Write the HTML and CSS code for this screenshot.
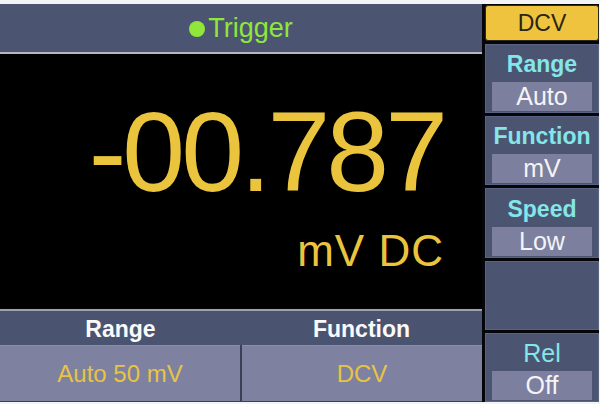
FILE: index.html
```html
<!DOCTYPE html>
<html>
<head>
<meta charset="utf-8">
<link rel="stylesheet" href="styles.css">
</head>
<body>
<div class="screen">
  <div class="main">
    <div class="topbar"><span class="dot"></span><span class="trigger">Trigger</span></div>
    <div class="display">
      <div class="value">-00.787</div>
      <div class="unit">mV DC</div>
    </div>
    <div class="bottom">
      <div class="heads">
        <div class="head">Range</div>
        <div class="head">Function</div>
      </div>
      <div class="boxes">
        <div class="box">Auto 50 mV</div>
        <div class="box">DCV</div>
      </div>
    </div>
  </div>
  <div class="side">
    <div class="mode">DCV</div>
    <div class="panel"><div class="label">Range</div><div class="pval">Auto</div></div>
    <div class="panel"><div class="label">Function</div><div class="pval">mV</div></div>
    <div class="panel"><div class="label">Speed</div><div class="pval">Low</div></div>
    <div class="panel"></div>
    <div class="panel"><div class="label thin">Rel</div><div class="pval">Off</div></div>
  </div>
</div>
</body>
</html>
```
FILE: styles.css
```css
html, body {
  margin: 0;
  padding: 0;
  background: #f4f4f6;
}
body {
  width: 600px;
  height: 404px;
  overflow: hidden;
  font-family: "Liberation Sans", Arial, sans-serif;
}
.screen {
  margin-top: 4px;
  height: 398px;
  width: 599px;
  background: #05060a;
  display: flex;
  gap: 3px;
}
.main {
  width: 482px;
  display: flex;
  flex-direction: column;
}
.topbar {
  height: 48px;
  background: #4b5571;
  border-bottom: 2px solid #b4b8c2;
  display: flex;
  align-items: center;
  justify-content: center;
  gap: 3px;
}
.dot {
  width: 16px;
  height: 16px;
  border-radius: 50%;
  background: #90e63a;
  margin-top: 1px;
}
.trigger {
  color: #90e63a;
  font-size: 27px;
  line-height: 1;
}
.display {
  height: 254px;
  background: #000;
  display: flex;
  flex-direction: column;
  align-items: flex-end;
  padding-right: 38px;
}
.value {
  color: #ebc43e;
  font-size: 113px;
  letter-spacing: -4px;
  line-height: 1;
  margin-top: 42px;
}
.unit {
  color: #ebc43e;
  font-size: 44px;
  letter-spacing: 1px;
  line-height: 1;
  margin-top: 20px;
}
.bottom {
  flex: 1;
  border-top: 2px solid #9ea2ae;
  display: flex;
  flex-direction: column;
  margin-top: 1px;
}
.heads {
  height: 34px;
  background: #4a5471;
  display: flex;
}
.head {
  flex: 1;
  color: #fafafa;
  font-weight: bold;
  font-size: 23px;
  display: flex;
  align-items: center;
  justify-content: center;
  padding-top: 2px;
}
.boxes {
  flex: 1;
  display: flex;
  gap: 2px;
  background: #3a3f56;
  padding-bottom: 1px;
}
.box {
  flex: 1;
  background: #7e81a0;
  color: #e8c443;
  font-size: 24px;
  display: flex;
  align-items: center;
  justify-content: center;
  border-top: 1px solid #8c8fac;
}
.side {
  flex: 1;
  display: flex;
  flex-direction: column;
  gap: 3px;
}
.mode {
  height: 34px;
  margin-top: 1px;
  background: #f0c33e;
  border: 1px solid #2b2a22;
  border-radius: 3px;
  color: #2a2412;
  font-size: 23px;
  display: flex;
  align-items: center;
  justify-content: center;
}
.panel {
  flex: 1;
  background: #4b5571;
  border: 1px solid #5a6482;
  display: flex;
  flex-direction: column;
  padding: 0 6px 1px;
}
.label {
  flex: 1;
  color: #84e6e8;
  font-weight: bold;
  font-size: 23px;
  display: flex;
  align-items: center;
  justify-content: center;
  padding-top: 2px;
}
.label.thin {
  font-weight: normal;
  font-size: 25px;
}
.pval {
  height: 29px;
  background: #7c7f9e;
  color: #f4f4f6;
  font-size: 25px;
  display: flex;
  align-items: center;
  justify-content: center;
}
```
